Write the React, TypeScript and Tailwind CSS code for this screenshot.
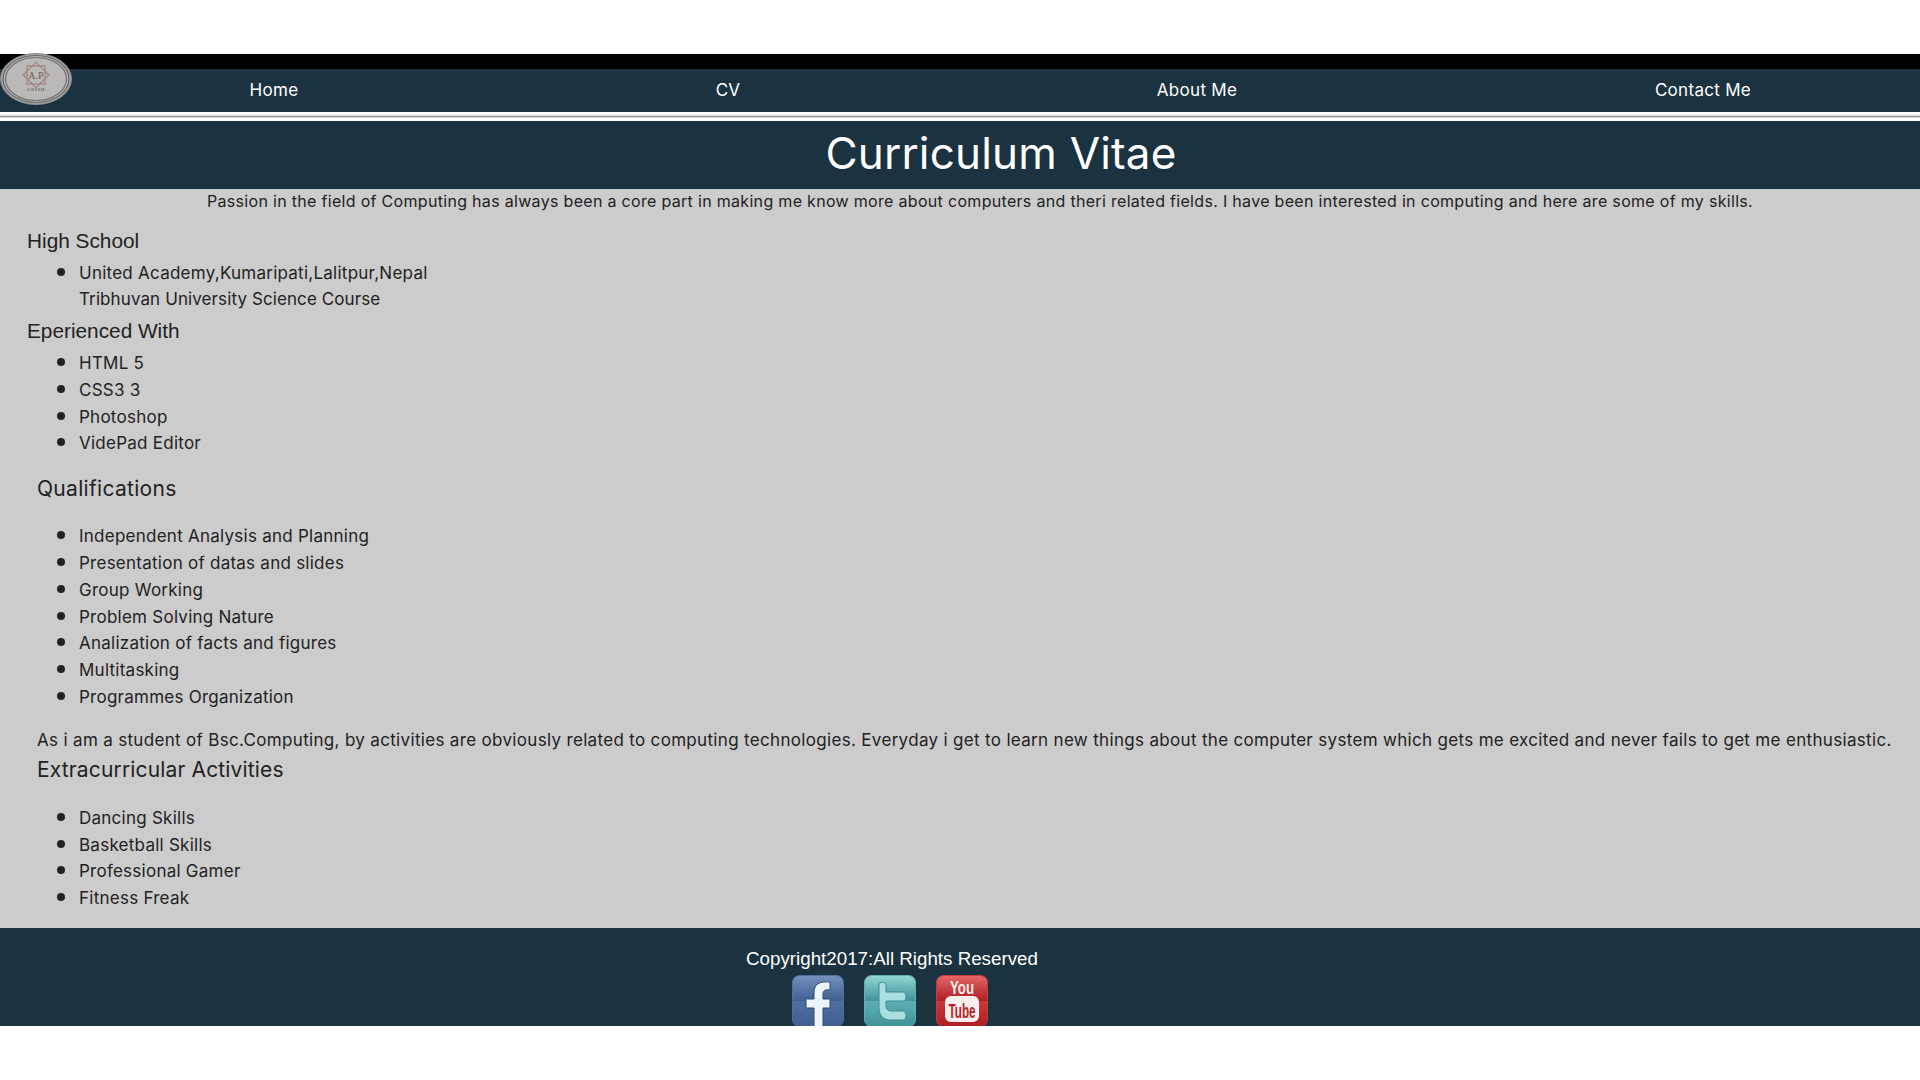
import React from 'react';

const body = { fontFamily: 'Inter, "Liberation Sans", sans-serif' };
const arial = { fontFamily: '"Liberation Sans", sans-serif' };

function Logo() {
  return (
    <svg viewBox="0 0 72 52" className="absolute left-0 top-[53px] w-[72px] h-[52px]">
      <ellipse cx="36" cy="26" rx="35.5" ry="25.5" fill="#a3a3a3" stroke="#8d8d8d" />
      <ellipse cx="36" cy="26" rx="33" ry="23.5" fill="#b7b6b5" stroke="#666" strokeWidth="1.2" />
      <ellipse cx="36" cy="26" rx="30.5" ry="21.5" fill="#bab9b8" stroke="#707070" strokeWidth="1.2" />
      <rect x="27" y="13" width="18" height="18" fill="none" stroke="#9c8378" strokeWidth="1.2" />
      <rect x="27" y="13" width="18" height="18" fill="none" stroke="#9c8378" strokeWidth="1.2" transform="rotate(45 36 22)" />
      <text x="36" y="26" textAnchor="middle" fontSize="10" fill="#6e5a52" fontFamily="Liberation Serif, serif">A.P</text>
      <text x="36" y="38" textAnchor="middle" fontSize="4.5" fontWeight="700" fill="#74615a" letterSpacing="0.8" fontFamily="Liberation Serif, serif">ANISH</text>
    </svg>
  );
}

function Tile({ from, to, mid, children }: { from: string; to: string; mid: string; children: React.ReactNode }) {
  return (
    <svg viewBox="0 0 52 52" className="w-[52px] h-[52px] shrink-0">
      <defs>
        <linearGradient id={from} x1="0" y1="0" x2="0" y2="1">
          <stop offset="0" stopColor={from} />
          <stop offset="0.5" stopColor={to} />
          <stop offset="0.5" stopColor={mid} />
          <stop offset="1" stopColor={to} />
        </linearGradient>
      </defs>
      <rect x="0.5" y="0.5" width="51" height="51" rx="7" fill={`url(#${from})`} stroke={mid} />
      {children}
    </svg>
  );
}

function List({ items, className = '' }: { items: string[]; className?: string }) {
  return (
    <ul className={`list-disc marker:text-[24px] pl-[79px] text-[17px] leading-[26.8px] tracking-[0.25px] text-[#222] ${className}`}>
      {items.map((t) => (
        <li key={t} className="h-[26.8px]">{t}</li>
      ))}
    </ul>
  );
}

export default function App() {
  return (
    <div className="relative min-h-screen bg-white" style={body}>
      <div className="h-[54px]" />
      <div className="h-[15px] bg-black" />
      <Logo />
      <nav className="h-[43px] pt-[1px] bg-[#1b3340] text-white text-[17px] tracking-[0.3px] grid grid-cols-[548px_360px_578px_434px] items-center">
        <a className="text-center">Home</a>
        <a className="text-center">CV</a>
        <a className="text-center">About Me</a>
        <a className="text-center">Contact Me</a>
      </nav>
      <div className="h-[9px] flex flex-col justify-center">
        <hr className="h-[3px] border-y border-[#d8d8d8] bg-[#9a9a9a]" />
      </div>
      <header className="h-[68px] bg-[#1b3340] text-white text-[44px] leading-[64px] tracking-[0.2px] flex justify-center pl-[82px]">
        Curriculum Vitae
      </header>
      <main className="h-[739px] bg-[#cccccc] text-[#222] overflow-hidden">
        <p className="text-[16px] leading-[24px] tracking-[0.31px] text-center pl-[40px]">
          Passion in the field of Computing has always been a core part in making me know more about computers and theri related fields. I have been interested in computing and here are some of my skills.
        </p>
        <h3 className="pl-[27px] mt-[15px] text-[20.8px] leading-[26px]" style={arial}>High School</h3>
        <List className="mt-[4px]" items={['United Academy,Kumaripati,Lalitpur,Nepal']} />
        <p className="pl-[79px] mt-[1.5px] text-[17px] leading-[26.8px] tracking-[0.1px]">Tribhuvan University Science Course</p>
        <h3 className="pl-[27px] mt-[5px] text-[20.8px] leading-[26px]" style={arial}>Eperienced With</h3>
        <List className="mt-[4px]" items={['HTML 5', 'CSS3 3', 'Photoshop', 'VidePad Editor']} />
        <h3 className="pl-[37px] mt-[19px] text-[21px] leading-[30px] tracking-[0.3px]">Qualifications</h3>
        <List
          className="mt-[17px]"
          items={[
            'Independent Analysis and Planning',
            'Presentation of datas and slides',
            'Group Working',
            'Problem Solving Nature',
            'Analization of facts and figures',
            'Multitasking',
            'Programmes Organization',
          ]}
        />
        <p className="pl-[37px] mt-[18px] text-[17px] leading-[26px] tracking-[0.325px] whitespace-nowrap">
          As i am a student of Bsc.Computing, by activities are obviously related to computing technologies. Everyday i get to learn new things about the computer system which gets me excited and never fails to get me enthusiastic.
        </p>
        <h3 className="pl-[37px] mt-[2.5px] text-[21px] leading-[30px] tracking-[0.15px]">Extracurricular Activities</h3>
        <List
          className="mt-[17.5px]"
          items={['Dancing Skills', 'Basketball Skills', 'Professional Gamer', 'Fitness Freak']}
        />
      </main>
      <footer className="h-[98px] bg-[#1b3340] overflow-hidden pr-[136px] pt-[19px] text-white flex flex-col items-center">
        <p className="text-[18.75px] leading-[23px]" style={arial}>Copyright2017:All Rights Reserved</p>
        <div className="flex gap-[20px] mt-[5px] -translate-x-[2px]">
          <Tile from="#7391bb" to="#3f5f92" mid="#4f6f9f">
            <path d="M14 24h8v-7c0-8 6-11 16-10v8c-5-1-7 1-7 4v5h7v9h-7v19h-9V33h-8z" fill="#eef4fb" stroke="#2f4a75" strokeWidth="1" />
          </Tile>
          <Tile from="#93d6d6" to="#3f9296" mid="#5cb0b2">
            <path d="M15 9c0-2 7-2 7 0v8h17c4 0 4 9 0 9H22v5c0 3 2 5 5 5h12c4 0 4 9 0 9H27c-8 0-12-5-12-12z" fill="#a9dfe0" stroke="#3f8c90" strokeWidth="1" />
          </Tile>
          <Tile from="#e56666" to="#ad1f22" mid="#c53a3c">
            <rect x="9" y="21" width="34" height="26" rx="6" fill="#fbeeee" />
            <text x="26" y="19" textAnchor="middle" fontSize="19" fontWeight="700" fill="#fbeeee" textLength="24" lengthAdjust="spacingAndGlyphs" fontFamily="Liberation Sans, sans-serif">You</text>
            <text x="26" y="43" textAnchor="middle" fontSize="21" fontWeight="700" fill="#b52225" textLength="27" lengthAdjust="spacingAndGlyphs" fontFamily="Liberation Sans, sans-serif">Tube</text>
          </Tile>
        </div>
      </footer>
      <div className="h-[54px]" />
    </div>
  );
}
